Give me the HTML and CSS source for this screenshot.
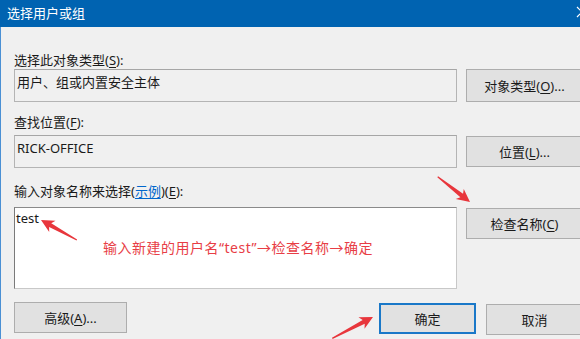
FILE: index.html
```html
<!DOCTYPE html>
<html lang="zh-CN">
<head>
<meta charset="utf-8">
<title>选择用户或组</title>
<link rel="stylesheet" href="styles.css">
</head>
<body>
<div class="window">
  <div class="titlebar">
    <span class="title">选择用户或组</span>
    <svg class="close" width="12" height="12" viewBox="0 0 12 12"><path d="M1 1 L11 11 M11 1 L1 11" stroke="#fff" stroke-width="1.2" fill="none"/></svg>
  </div>
  <div class="content">
    <div class="label sec1">选择此对象类型(<u>S</u>):</div>
    <div class="row">
      <div class="box">用户、组或内置安全主体</div>
      <div class="btn btn-first">对象类型(<u>O</u>)...</div>
    </div>
    <div class="label sec2">查找位置(<u>F</u>):</div>
    <div class="row row2">
      <div class="box">RICK-OFFICE</div>
      <div class="btn btn-mid">位置(<u>L</u>)...</div>
    </div>
    <div class="label sec3">输入对象名称来选择(<span class="link">示例</span>)(<u>E</u>):</div>
    <div class="row row3">
      <div class="textarea">test</div>
      <div class="btn btn-top">检查名称(<u>C</u>)</div>
    </div>
    <div class="bottom">
      <div class="btn btn-adv">高级(<u>A</u>)...</div>
      <div class="btn btn-ok">确定</div>
      <div class="btn btn-cancel">取消</div>
    </div>
  </div>
  <div class="note">输入新建的用户名“test”→检查名称→确定</div>
  <svg class="arrows" width="580" height="339" viewBox="0 0 580 339">
    <polygon transform="translate(41 220) rotate(-150.95)" points="0,0 -13,-6.5 -10.5,-2.2 -41,-0.6 -41,0.6 -10.5,2.2 -13,6.5" fill="#e8363c"/>
    <polygon transform="translate(470 202) rotate(37.99)" points="0,0 -13,-6.5 -10.5,-2.2 -41,-0.6 -41,0.6 -10.5,2.2 -13,6.5" fill="#e8363c"/>
    <polygon transform="translate(373 317) rotate(-27.7)" points="0,0 -13,-6.5 -10.5,-2.2 -46,-0.6 -46,0.6 -10.5,2.2 -13,6.5" fill="#e8363c"/>
  </svg>
</div>
</body>
</html>
```

FILE: styles.css
```css
* { box-sizing: border-box; }
html, body { margin: 0; padding: 0; }
body {
  width: 580px;
  height: 339px;
  overflow: hidden;
  background: #f0f0f0;
  font-family: "Noto Sans", "Noto Sans CJK SC", sans-serif;
  font-size: 13px;
  color: #1a1a1a;
}
.window {
  position: relative;
  width: 580px;
  height: 339px;
  overflow: hidden;
  background: #f0f0f0;
}
.titlebar {
  height: 27px;
  background: #0063b1;
  color: #fff;
  display: flex;
  align-items: center;
  justify-content: space-between;
  padding-left: 7px;
}
.title {
  font-size: 13px;
  line-height: 18px;
  margin-top: -2px;
}
.close {
  margin-right: -8px;
  margin-top: -3px;
  flex-shrink: 0;
}
.content {
  border-left: 1px solid #4a90d4;
  height: 312px;
  padding-left: 13px;
  padding-top: 24px;
}
.label {
  line-height: 18px;
  height: 18px;
  white-space: nowrap;
}
.sec2 { margin-top: 11px; }
.sec3 { margin-top: 14px; }
.row {
  display: flex;
  gap: 9px;
  align-items: flex-start;
}
.row2 { margin-top: 4px; }
.row3 { margin-top: 7px; }
.box {
  width: 443px;
  height: 33px;
  flex-shrink: 0;
  border: 1px solid #b4b4b4;
  border-top-color: #a6a6a6;
  padding: 3px 2px 0;
  line-height: 18px;
  white-space: nowrap;
}
.textarea {
  width: 443px;
  height: 82px;
  flex-shrink: 0;
  background: #fff;
  border: 1px solid #c8c8c8;
  border-top-color: #8a8a8a;
  border-left-color: #7a7a7a;
  padding: 1px 1px 0;
  line-height: 18px;
}
.btn {
  flex-shrink: 0;
  background: #e1e1e1;
  border: 1px solid #adadad;
  height: 31px;
  display: flex;
  align-items: center;
  justify-content: center;
  white-space: nowrap;
  line-height: 18px;
  width: 117px;
}
.btn-first { height: 33px; }
.btn-mid { margin-top: 1px; }
.btn-top { margin-top: 1px; }
.bottom {
  display: flex;
  margin-top: 13px;
}
.btn-adv { width: 113px; }
.btn-ok {
  width: 97px;
  margin-left: 252px;
  margin-top: 1px;
  border: 2px solid #1a78c8;
}
.btn-cancel {
  width: 97px;
  margin-left: 10px;
  margin-top: 2px;
}
u { text-decoration: underline; text-underline-offset: 2px; }
.link { color: #0066cc; text-decoration: underline; text-underline-offset: 2px; }
.note {
  position: absolute;
  left: 103px;
  top: 239px;
  color: #e83e46;
  font-size: 14px;
  line-height: 18px;
  letter-spacing: 0.5px;
  white-space: nowrap;
}
.arrows {
  position: absolute;
  left: 0;
  top: 0;
  pointer-events: none;
}
```
